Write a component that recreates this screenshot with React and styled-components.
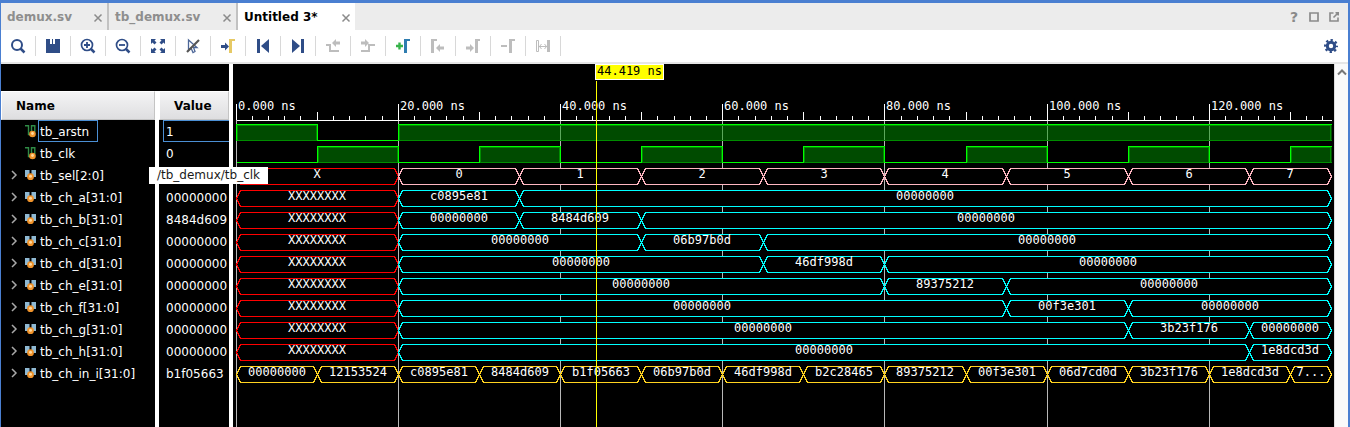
import React, { useLayoutEffect, useRef, useState } from "react";
import styled, { createGlobalStyle } from "styled-components";

const Global = createGlobalStyle`
  *, *::before, *::after { box-sizing: border-box; }
  body { margin: 0; font: 12px/22px "DejaVu Sans", sans-serif; background: #000; }
  button { font: inherit; border: 0; padding: 0; margin: 0; background: none; color: inherit; cursor: pointer; }
`;

const Window = styled.main`
  display: flex;
  flex-direction: column;
  min-height: 100vh;
  border: solid #4a7fd1;
  border-width: 3px 2px 0 1px;
  background: #000;
`;

const TabBar = styled.div`
  display: flex;
  justify-content: space-between;
  height: 27px;
  background: #ececec;
`;

const Tabs = styled.div`
  display: flex;
`;

const Tab = styled.div`
  display: flex;
  align-items: center;
  justify-content: space-between;
  padding: 0 4px 0 6px;
  width: ${(p) => p.$width}px;
  font-weight: bold;
  white-space: nowrap;
  color: ${(p) => (p.$active ? "#000" : "#8e8e8e")};
  background: ${(p) => (p.$active ? "#fff" : "transparent")};
  border-right: ${(p) => (p.$active ? "0" : "2px solid #c2c2c2")};
`;

const CloseButton = styled.button`
  display: flex;
  color: #8b8b8b;
  padding-top: 2px;
`;

const WindowControls = styled.div`
  display: flex;
  align-items: center;
  gap: 10px;
  padding-right: 9px;
  color: #8a8a8a;
`;

const IconButton = styled.button`
  display: flex;
  color: ${(p) => (p.disabled ? "#bdbdbd" : "#2f4d87")};
`;

const ControlButton = styled.button`
  display: flex;
  width: 10px;
  justify-content: center;
  font-weight: bold;
  font-size: 14px;
`;

const Toolbar = styled.div`
  display: flex;
  align-items: center;
  height: 34px;
  background: #fff;
  border-bottom: 2px solid #e6e6e6;
`;

const ToolCell = styled.div`
  display: flex;
  align-items: center;
  justify-content: center;
  width: 35px;
  height: 20px;
  border-right: 1px solid #d8d8d8;
`;

const SettingsCell = styled.div`
  margin-left: auto;
  padding-right: 10px;
`;

const Workspace = styled.div`
  flex: 1;
  display: grid;
  grid-template-columns: 228px 4px minmax(0, 1fr) 14px;
`;

const Divider = styled.div`
  background: #fff;
`;

const SignalPane = styled.div`
  display: grid;
  grid-template-columns: 154px 4px 70px;
  padding-top: 27px;
`;

const Column = styled.div`
  min-width: 0;
  color: #fff;
`;

const ColumnHeader = styled.div`
  display: flex;
  align-items: center;
  height: 29px;
  padding-left: 14px;
  font-weight: bold;
  color: #000;
  background: linear-gradient(#f4f4f5, #dedee0);
  border: 1px solid #c4c4c4;
  border-top-color: #fff;
  border-left-color: #fff;
`;

const NameRow = styled.div`
  display: flex;
  align-items: center;
  height: 22px;
  padding-left: 9px;
`;

const Expander = styled.button`
  display: flex;
  width: 14px;
  height: 12px;
  color: #a8a8a8;
`;

const NameText = styled.span`
  height: 22px;
  margin-left: 1px;
  padding: 0 8px 0 1px;
  border: 1px solid ${(p) => (p.$selected ? "#4b8fd4" : "transparent")};
  white-space: nowrap;
`;

const ValueCell = styled.div`
  height: 22px;
  margin-left: 4px;
  padding-left: 2px;
  border: 1px solid ${(p) => (p.$selected ? "#4b8fd4" : "transparent")};
  border-right: 0;
  overflow: hidden;
  white-space: nowrap;
`;

const WavePane = styled.div`
  position: relative;
  min-width: 0;
  overflow: hidden;
`;

const WaveSvg = styled.svg`
  position: absolute;
  inset: 0;
  width: 100%;
  height: 100%;
  shape-rendering: crispEdges;
  font: 12px "DejaVu Sans Mono", monospace;
`;

const CursorLabel = styled.div`
  position: absolute;
  top: 0;
  padding: 0 1px;
  height: 16px;
  font: 12px/13px "DejaVu Sans Mono", monospace;
  white-space: nowrap;
  color: #000;
  background: #ff0;
  border: 1px solid #fff;
`;

const ScrollTrack = styled.div`
  display: flex;
  justify-content: center;
  padding-top: 4px;
  color: #777;
  background: #fafafa;
  border-left: 1px solid #ddd;
`;

const ScrollButton = styled.button`
  display: flex;
  height: 8px;
`;

const Tooltip = styled.div`
  position: absolute;
  left: 149px;
  top: 167px;
  height: 17px;
  padding: 0 8px;
  line-height: 17px;
  color: #1a1a1a;
  background: #fff;
  white-space: nowrap;
`;

const CloseIcon = () => (
  <svg width="10" height="10" viewBox="0 0 10 10" stroke="currentColor" strokeWidth="1.5">
    <path d="M1.5 1.5L8.5 8.5M8.5 1.5L1.5 8.5" />
  </svg>
);

const lens = (
  <>
    <circle cx="7" cy="7" r="5.5" fill="none" stroke="currentColor" strokeWidth="1.7" />
    <path d="M10.5 10.5L14.5 14.5" stroke="currentColor" strokeWidth="2.5" />
  </>
);

const leftArrow = "M0 4L4 0V2.5H8V5.5H4V8Z";
const rightArrow = "M8 4L4 0V2.5H0V5.5H4V8Z";

const glyphs = {
  search: (
    <>
      <circle cx="7" cy="7" r="5" fill="none" stroke="currentColor" strokeWidth="2" />
      <path d="M10.5 10.5L14.5 14.5" stroke="currentColor" strokeWidth="2.5" />
    </>
  ),
  save: <path d="M1 1H5V6H7V1H8V6H10V1H15V15H1Z" fill="currentColor" />,
  zoomIn: (
    <>
      {lens}
      <path d="M4 7H10M7 4V10" stroke="currentColor" strokeWidth="1.8" />
    </>
  ),
  zoomOut: (
    <>
      {lens}
      <path d="M4 7H10" stroke="currentColor" strokeWidth="1.8" />
    </>
  ),
  fit: (
    <path
      d="M1 1H6L4.5 2.5L6.5 4.5L4.5 6.5L2.5 4.5L1 6ZM15 1V6L13.5 4.5L11.5 6.5L9.5 4.5L11.5 2.5L10 1ZM1 15V10L2.5 11.5L4.5 9.5L6.5 11.5L4.5 13.5L6 15ZM15 15H10L11.5 13.5L9.5 11.5L11.5 9.5L13.5 11.5L15 10Z"
      fill="currentColor"
    />
  ),
  cursorOff: (
    <>
      <path d="M3.5 2V12L6 10L8 14.5L10 13.5L8.5 9.5H12Z" fill="#fff" stroke="#4d6799" strokeWidth="1.3" />
      <path d="M2 14L14 2" stroke="#555" strokeWidth="2.2" />
    </>
  ),
  gotoCursor: (
    <>
      <path d="M1 7H5V4.5L9 8.5L5 12.5V10H1Z" fill="currentColor" />
      <path d="M9 1H15V3H12V15H9Z" fill="#e6c965" />
    </>
  ),
  first: (
    <>
      <path d="M2 1H5V15H2Z" fill="currentColor" />
      <path d="M14 1V15L6 8Z" fill="currentColor" />
    </>
  ),
  last: (
    <>
      <path d="M11 1H14V15H11Z" fill="currentColor" />
      <path d="M2 1V15L10 8Z" fill="currentColor" />
    </>
  ),
  prevEdge: (
    <>
      <path d="M1 7H5V13H14" fill="none" stroke="currentColor" strokeWidth="2" />
      <path d={leftArrow} transform="translate(7 1)" fill="currentColor" />
    </>
  ),
  nextEdge: (
    <>
      <path d="M1 13H9V7H15" fill="none" stroke="currentColor" strokeWidth="2" />
      <path d={rightArrow} transform="translate(1 1)" fill="currentColor" />
    </>
  ),
  addMarker: (
    <>
      <path d="M1 8H8M4.5 4.5V11.5" stroke="#37b34a" strokeWidth="2.4" />
      <path d="M9 1H15V3H12V15H9Z" fill="#2f7db0" />
    </>
  ),
  prevMarker: (
    <>
      <path d="M1 1H7V3H4V15H1Z" fill="currentColor" />
      <path d={leftArrow} transform="translate(6 6)" fill="currentColor" />
    </>
  ),
  nextMarker: (
    <>
      <path d={rightArrow} transform="translate(1 6)" fill="currentColor" />
      <path d="M10 1H15V3H13V15H10Z" fill="currentColor" />
    </>
  ),
  removeMarker: (
    <>
      <path d="M1 8H7" stroke="currentColor" strokeWidth="2" />
      <path d="M9 1H15V3H12V15H9Z" fill="currentColor" />
    </>
  ),
  swap: (
    <>
      <path d="M1.5 2.5H3.5V13.5H1.5Z" fill="none" stroke="currentColor" />
      <path d="M12 2H15V14H12Z" fill="currentColor" />
      <path d="M4 8.5H12M6.5 6L4.5 8.5L6.5 11M9.500 6L11.500 8.500L9.500 11" fill="none" stroke="currentColor" />
    </>
  ),
};

const tools = [
  ["search", "Find"],
  ["save", "Save waveform"],
  ["zoomIn", "Zoom in"],
  ["zoomOut", "Zoom out"],
  ["fit", "Zoom fit"],
  ["cursorOff", "Zoom to cursor"],
  ["gotoCursor", "Go to cursor"],
  ["first", "Go to time 0"],
  ["last", "Go to last time"],
  ["prevEdge", "Previous transition", true],
  ["nextEdge", "Next transition", true],
  ["addMarker", "Add marker"],
  ["prevMarker", "Previous marker", true],
  ["nextMarker", "Next marker", true],
  ["removeMarker", "Remove marker", true],
  ["swap", "Swap cursors", true],
];

const GearIcon = () => (
  <svg width="14" height="14" viewBox="0 0 14 14" fill="none" stroke="currentColor">
    <circle cx="7" cy="7" r="3.7" strokeWidth="3" />
    <circle cx="7" cy="7" r="5.9" strokeWidth="2.2" strokeDasharray="2.317 2.317" strokeDashoffset="1.158" />
  </svg>
);

const ScalarIcon = () => (
  <svg width="13" height="14" viewBox="0 0 13 14">
    <path d="M1 1.700H4.500V10.500H7.500V1.700H10.800V8" fill="none" stroke="#2f8a45" strokeWidth="1.400" />
    <circle cx="8.500" cy="10" r="3.300" fill="#f0932b" />
    <circle cx="8.500" cy="9.500" r="1.400" fill="#ffd9a0" />
  </svg>
);

const BusIcon = () => (
  <svg width="13" height="14" viewBox="0 0 13 14">
    <path d="M1 2H5.500V6L4 9H1ZM7.500 2H12V9H9L7.500 6Z" fill="#8fb9d3" />
    <circle cx="6.500" cy="8.700" r="3.400" fill="#f0932b" />
    <circle cx="6.500" cy="8.200" r="1.500" fill="#ffd9a0" />
  </svg>
);

const Z = "00000000";
const X = "XXXXXXXX";
const END = 135;
const RED = "#ff0000";
const CYAN = "#00ffff";
const PINK = "#ffb6c1";
const GOLD = "#ffd320";

// Each bus is a list of [start time in ns, text] pairs.
const inputs = [Z, "12153524", "c0895e81", "8484d609", "b1f05663", "06b97b0d", "46df998d", "b2c28465", "89375212", "00f3e301", "06d7cd0d", "3b23f176", "1e8dcd3d", "7..."];

const signals = [
  { name: "tb_arstn", value: "1", high: [[0, 10], [20, END]], selected: true },
  { name: "tb_clk", value: "0", high: [[10, 20], [30, 40], [50, 60], [70, 80], [90, 100], [110, 120], [130, END]] },
  { name: "tb_sel[2:0]", value: "1", color: PINK, bus: [[0, "X"], [20, "0"], [35, "1"], [50, "2"], [65, "3"], [80, "4"], [95, "5"], [110, "6"], [125, "7"]] },
  { name: "tb_ch_a[31:0]", value: Z, color: CYAN, bus: [[0, X], [20, "c0895e81"], [35, Z]] },
  { name: "tb_ch_b[31:0]", value: "8484d609", color: CYAN, bus: [[0, X], [20, Z], [35, "8484d609"], [50, Z]] },
  { name: "tb_ch_c[31:0]", value: Z, color: CYAN, bus: [[0, X], [20, Z], [50, "06b97b0d"], [65, Z]] },
  { name: "tb_ch_d[31:0]", value: Z, color: CYAN, bus: [[0, X], [20, Z], [65, "46df998d"], [80, Z]] },
  { name: "tb_ch_e[31:0]", value: Z, color: CYAN, bus: [[0, X], [20, Z], [80, "89375212"], [95, Z]] },
  { name: "tb_ch_f[31:0]", value: Z, color: CYAN, bus: [[0, X], [20, Z], [95, "00f3e301"], [110, Z]] },
  { name: "tb_ch_g[31:0]", value: Z, color: CYAN, bus: [[0, X], [20, Z], [110, "3b23f176"], [125, Z]] },
  { name: "tb_ch_h[31:0]", value: Z, color: CYAN, bus: [[0, X], [20, Z], [125, "1e8dcd3d"]] },
  { name: "tb_ch_in_i[31:0]", value: "b1f05663", color: GOLD, bus: inputs.map((text, i) => [i * 10, text]) },
];

const RULER = 56;
const ROW = 22;

function ScalarWave({ signal, top, px }) {
  let d = `M${px(0)} ${top + 16.5}`;
  signal.high.forEach(([a, b]) => {
    d += `H${px(a)}V${top + 0.5}H${px(b)}`;
    if (b < END) d += `V${top + 16.5}`;
  });
  return (
    <g>
      {signal.high.map(([a, b]) => (
        <g key={a}>
          <rect x={px(a)} y={top} width={px(b) - px(a)} height="17" fill="#009600" fillOpacity="0.5" />
          <path
            d={`M${px(a) + 1} ${top + 16}V${top + 1.5}H${px(b) - 1}V${top + 16}M${px(a)} ${top + 16.5}H${px(b)}`}
            fill="none"
            stroke="#008c00"
          />
        </g>
      ))}
      <path d={d} fill="none" stroke="#00ff00" />
    </g>
  );
}

function BusWave({ signal, top, px }) {
  const t = top + 0.5;
  const b = top + 16.5;
  const m = top + 8.5;
  return signal.bus.map(([start, text], i) => {
    const end = signal.bus[i + 1] ? signal.bus[i + 1][0] : END;
    const l = px(start);
    const r = px(end);
    return (
      <g key={start}>
        <path
          d={`M${l} ${m}L${l + 4} ${t}H${r - 4}L${r} ${m}L${r - 4} ${b}H${l + 4}Z`}
          fill="#000"
          stroke={text[0] === "X" ? RED : signal.color}
        />
        <text x={Math.floor((l + r) / 2)} y={top + 10} textAnchor="middle" fill="#fff">{text}</text>
      </g>
    );
  });
}

function Waveform() {
  const ref = useRef(null);
  const [width, setWidth] = useState(1101);
  useLayoutEffect(() => {
    const measure = () => setWidth(ref.current.clientWidth);
    measure();
    const observer = new ResizeObserver(measure);
    observer.observe(ref.current);
    return () => observer.disconnect();
  }, []);

  const px = (ns) => Math.floor(3 + (ns * (width - 6)) / END) + 0.5;
  const ticks = Array.from({ length: 68 }, (_, i) => i * 2);
  const cursor = px(44.419);

  return (
    <WavePane ref={ref}>
      <WaveSvg role="img" aria-label="Waveforms">
        {[0, 20, 40, 60, 80, 100, 120].map((t) => (
          <g key={t}>
            <path d={`M${px(t)} ${RULER}V2000`} stroke="#b8b8b8" />
            <path d={`M${px(t)} 40V${RULER}`} stroke="#fff" />
            <text x={px(t) + 1.5} y="46" fill="#fff">{`${t}.000 ns`}</text>
          </g>
        ))}
        {ticks.map((t) => <path key={t} d={`M${px(t)} 52V${RULER}`} stroke="#fff" />)}
        {[10, 30, 50, 70, 90, 110, 130].map((t) => <path key={t} d={`M${px(t)} 48V${RULER}`} stroke="#fff" />)}
        <path d={`M${px(0)} ${RULER + 0.5}H${px(END)}`} stroke="#fff" />
        {signals.map((signal, i) => {
          const Wave = signal.bus ? BusWave : ScalarWave;
          return <Wave key={signal.name} signal={signal} top={RULER + 4 + i * ROW} px={px} />;
        })}
        <path d={`M${cursor} 17V2000`} stroke="#ff0" />
      </WaveSvg>
      <CursorLabel style={{ left: Math.floor(cursor) - 1 }}>44.419 ns</CursorLabel>
    </WavePane>
  );
}

export default function App() {
  return (
    <Window>
      <Global />
      <TabBar>
        <Tabs>
          {[["demux.sv", 108], ["tb_demux.sv", 129], ["Untitled 3*", 117]].map(([label, width], i) => (
            <Tab key={label} $width={width} $active={i === 2}>
              {label}
              <CloseButton aria-label={`Close ${label}`}><CloseIcon /></CloseButton>
            </Tab>
          ))}
        </Tabs>
        <WindowControls>
          <ControlButton aria-label="Help">?</ControlButton>
          <ControlButton aria-label="Maximize">
            <svg width="10" height="10" viewBox="0 0 10 10"><path d="M1 1H9V9H1Z" fill="none" stroke="currentColor" strokeWidth="1.7" /></svg>
          </ControlButton>
          <ControlButton aria-label="Float">
            <svg width="10" height="10" viewBox="0 0 10 10" fill="none" stroke="currentColor" strokeWidth="1.6"><path d="M4.5 1H1V9H9V5.5M4.500 5.500L9 1M6.500 .8H9.200V3.500" /></svg>
          </ControlButton>
        </WindowControls>
      </TabBar>
      <Toolbar>
        {tools.map(([icon, label, disabled]) => (
          <ToolCell key={icon}>
            <IconButton aria-label={label} disabled={disabled}>
              <svg width="16" height="16" viewBox="0 0 16 16">{glyphs[icon]}</svg>
            </IconButton>
          </ToolCell>
        ))}
        <SettingsCell>
          <IconButton aria-label="Settings"><GearIcon /></IconButton>
        </SettingsCell>
      </Toolbar>
      <Workspace>
        <SignalPane>
          <Column>
            <ColumnHeader>Name</ColumnHeader>
            {signals.map((s) => (
              <NameRow key={s.name}>
                {s.bus ? (
                  <Expander aria-label={`Expand ${s.name}`}>
                    <svg width="8" height="12" viewBox="0 0 8 12"><path d="M2 2L6 6L2 10" fill="none" stroke="currentColor" strokeWidth="1.5" /></svg>
                  </Expander>
                ) : (
                  <Expander as="span" />
                )}
                {s.bus ? <BusIcon /> : <ScalarIcon />}
                <NameText $selected={s.selected}>{s.name}</NameText>
              </NameRow>
            ))}
          </Column>
          <Divider />
          <Column>
            <ColumnHeader>Value</ColumnHeader>
            {signals.map((s) => <ValueCell key={s.name} $selected={s.selected}>{s.value}</ValueCell>)}
          </Column>
        </SignalPane>
        <Divider />
        <Waveform />
        <ScrollTrack>
          <ScrollButton aria-label="Scroll up">
            <svg width="12" height="8" viewBox="0 0 12 8"><path d="M2 6.5L6 2.500L10 6.500" fill="none" stroke="currentColor" strokeWidth="2" /></svg>
          </ScrollButton>
        </ScrollTrack>
      </Workspace>
      <Tooltip role="tooltip">/tb_demux/tb_clk</Tooltip>
    </Window>
  );
}
